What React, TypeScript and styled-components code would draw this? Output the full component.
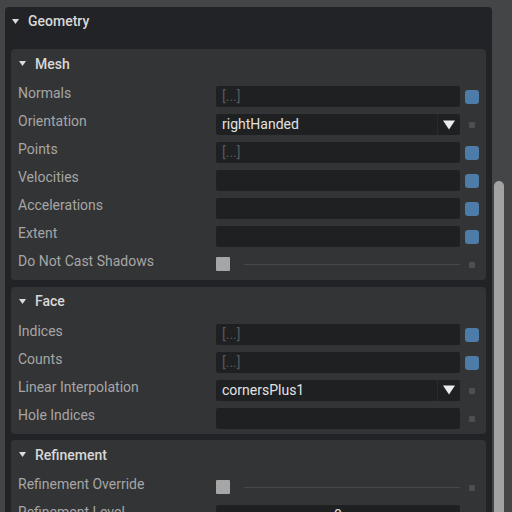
import styled, { createGlobalStyle } from "styled-components";

const GlobalStyle = createGlobalStyle`
  html, body {
    margin: 0;
    height: 512px;
    overflow: hidden;
    background: #444546;
    font-family: Roboto, "Liberation Sans", sans-serif;
  }
`;

const Page = styled.div`
  display: flex;
  height: 512px;
  padding: 7px 0 0 5px;
  box-sizing: border-box;
`;

const Panel = styled.div`
  width: 487px;
  flex-shrink: 0;
  background: #222326;
  border-radius: 4px 4px 0 0;
  padding: 0 6px;
  box-sizing: border-box;
  overflow: hidden;
`;

const ScrollTrack = styled.div`
  flex: 1;
  padding: 174px 0 0 2px;
`;

const ScrollThumb = styled.div`
  width: 10px;
  height: 100%;
  background: #a3a3a3;
  border-radius: 5px 5px 0 0;
`;

const Header = styled.div<{ $top?: boolean }>`
  display: flex;
  align-items: center;
  gap: 9px;
  height: ${(p) => (p.$top ? "28px" : "29px")};
  margin-bottom: ${(p) => (p.$top ? "14px" : "4px")};
  padding-left: 1px;
  color: #d8d8d8;
  font-size: 14px;
  font-weight: 500;
`;

const Section = styled.div`
  background: #333435;
  border-radius: 4px;
  padding: 0 7px 2px;
  margin-bottom: 6.5px;
`;

const Row = styled.div`
  display: grid;
  grid-template-columns: 193px 1fr 14px;
  column-gap: 5px;
  align-items: start;
  height: 28px;
`;

const Label = styled.div`
  color: #a6a6a6;
  font-size: 14px;
  line-height: 16px;
  padding-top: 3px;
  white-space: nowrap;
`;

const Field = styled.div<{ $center?: boolean }>`
  display: flex;
  margin-top: 4px;
  height: 21px;
  background: #1f2022;
  border-radius: 2px;
  overflow: hidden;
  justify-content: ${(p) => (p.$center ? "center" : "flex-start")};
`;

const FieldText = styled.span<{ $muted?: boolean }>`
  flex: 1;
  padding-left: 6px;
  font-size: 14px;
  line-height: 21px;
  color: ${(p) => (p.$muted ? "#575859" : "#e2e2e2")};
`;

const CenterText = styled.span`
  font-size: 14px;
  line-height: 21px;
  color: #e2e2e2;
`;

const ArrowBox = styled.div`
  width: 22px;
  display: flex;
  align-items: center;
  justify-content: center;
  border-left: 1px solid #2a2b2d;
`;

const BlueBox = styled.div`
  margin-top: 8px;
  width: 14px;
  height: 14px;
  border-radius: 3px;
  background: #4c7ca7;
`;

const Dot = styled.div`
  margin-top: 12px;
  justify-self: center;
  width: 6px;
  height: 6px;
  border-radius: 1px;
  background: #4d4e4f;
`;

const CheckWrap = styled.div`
  display: flex;
  align-items: center;
  height: 28px;
  gap: 14px;
`;

const CheckBox = styled.div`
  width: 14px;
  height: 14px;
  border-radius: 1px;
  background: #a6a6a6;
  flex-shrink: 0;
`;

const Line = styled.div`
  flex: 1;
  height: 1px;
  background: #474849;
`;

function Caret() {
  return (
    <svg width={7} height={5} viewBox="0 0 7 5">
      <polygon points="0,0 7,0 3.5,5" fill="#dcdcdc" />
    </svg>
  );
}

function DropArrow() {
  return (
    <svg width="12" height="10" viewBox="0 0 12 10">
      <polygon points="0,0.5 12,0.5 6,9.5" fill="#ececec" />
    </svg>
  );
}

type Kind = "array" | "empty" | "select" | "check" | "plain" | "number";

interface Prop {
  label: string;
  kind: Kind;
  value?: string;
  blue?: boolean;
}

function PropRow({ label, kind, value, blue }: Prop) {
  let control;
  if (kind === "check") {
    control = (
      <CheckWrap>
        <CheckBox />
        <Line />
      </CheckWrap>
    );
  } else if (kind === "select") {
    control = (
      <Field>
        <FieldText>{value}</FieldText>
        <ArrowBox>
          <DropArrow />
        </ArrowBox>
      </Field>
    );
  } else if (kind === "number") {
    control = (
      <Field $center>
        <CenterText>{value}</CenterText>
      </Field>
    );
  } else {
    control = (
      <Field>
        <FieldText $muted>{kind === "array" ? "[...]" : ""}</FieldText>
      </Field>
    );
  }
  return (
    <Row>
      <Label>{label}</Label>
      {control}
      {blue ? <BlueBox /> : <Dot />}
    </Row>
  );
}

const sections: { title: string; rows: Prop[] }[] = [
  {
    title: "Mesh",
    rows: [
      { label: "Normals", kind: "array", blue: true },
      { label: "Orientation", kind: "select", value: "rightHanded" },
      { label: "Points", kind: "array", blue: true },
      { label: "Velocities", kind: "empty", blue: true },
      { label: "Accelerations", kind: "empty", blue: true },
      { label: "Extent", kind: "empty", blue: true },
      { label: "Do Not Cast Shadows", kind: "check" },
    ],
  },
  {
    title: "Face",
    rows: [
      { label: "Indices", kind: "array", blue: true },
      { label: "Counts", kind: "array", blue: true },
      { label: "Linear Interpolation", kind: "select", value: "cornersPlus1" },
      { label: "Hole Indices", kind: "plain" },
    ],
  },
  {
    title: "Refinement",
    rows: [
      { label: "Refinement Override", kind: "check" },
      { label: "Refinement Level", kind: "number", value: "0" },
    ],
  },
];

export default function App() {
  return (
    <>
      <GlobalStyle />
      <Page>
        <Panel>
          <Header $top>
            <Caret />
            Geometry
          </Header>
          {sections.map((s) => (
            <Section key={s.title}>
              <Header>
                <Caret />
                {s.title}
              </Header>
              {s.rows.map((r) => (
                <PropRow key={r.label} {...r} />
              ))}
            </Section>
          ))}
        </Panel>
        <ScrollTrack>
          <ScrollThumb />
        </ScrollTrack>
      </Page>
    </>
  );
}
